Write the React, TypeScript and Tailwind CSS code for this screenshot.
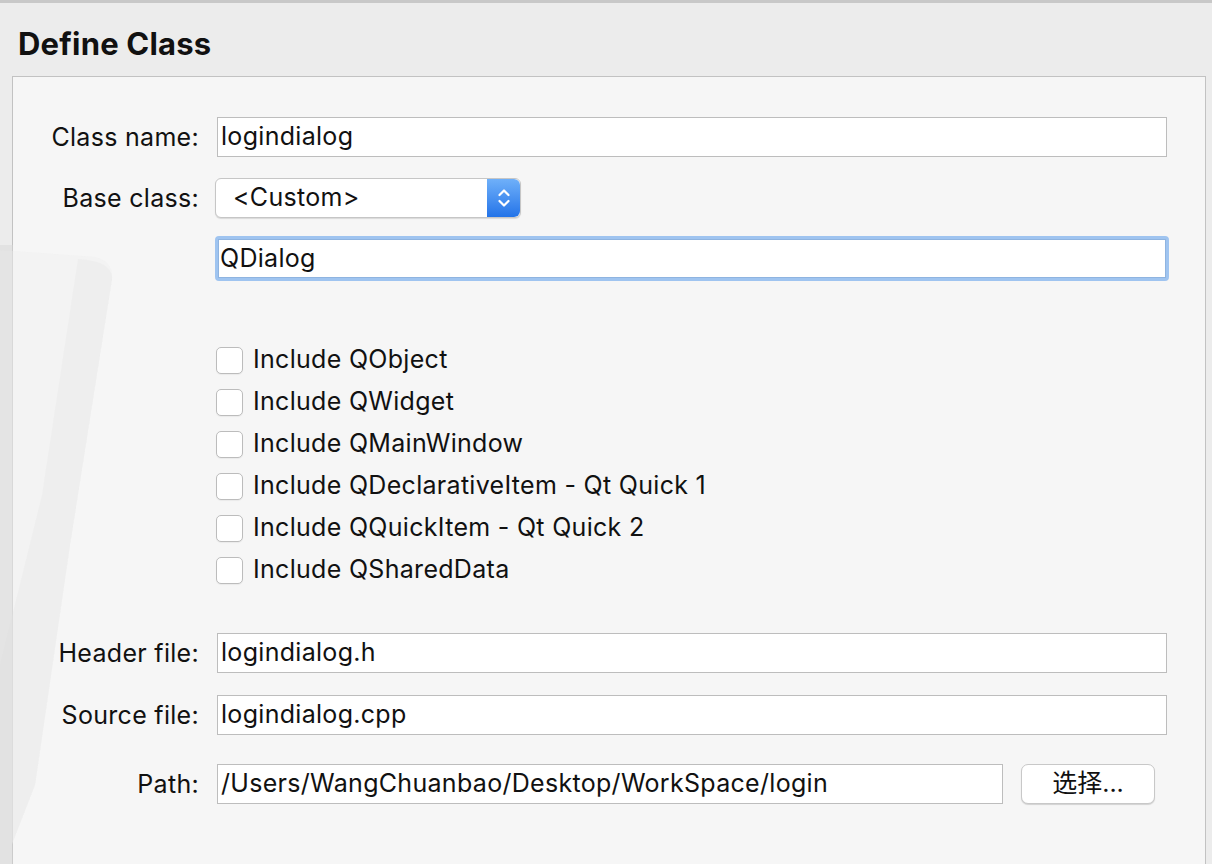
import React from 'react';

const font = { fontFamily: 'Inter, "Noto Sans CJK SC", "Liberation Sans", sans-serif' };

const checks = [
  'Include QObject',
  'Include QWidget',
  'Include QMainWindow',
  'Include QDeclarativeItem - Qt Quick 1',
  'Include QQuickItem - Qt Quick 2',
  'Include QSharedData',
];

function Label({ children }: { children: React.ReactNode }) {
  return <div className="text-right text-[25px] tracking-[0.3px] leading-none text-[#111]">{children}</div>;
}

function TextBox({ value, className = '' }: { value: string; className?: string }) {
  return (
    <div
      className={`h-[40px] bg-white border border-[#bdbdbd] flex items-center pl-[3px] text-[25px] tracking-[0.3px] text-[#111] ${className}`}
    >
      {value}
    </div>
  );
}

function Stepper() {
  return (
    <div className="w-[33px] h-full rounded-r-[6px] bg-gradient-to-b from-[#6fb0f9] to-[#2273e8] flex items-center justify-center">
      <svg width="16" height="26" viewBox="0 0 16 26" fill="none" stroke="white" strokeWidth="2.2" strokeLinecap="round" strokeLinejoin="round">
        <path d="M3.5 10 L8 5.5 L12.5 10" />
        <path d="M3.5 16 L8 20.5 L12.5 16" />
      </svg>
    </div>
  );
}

export default function App() {
  return (
    <div className="relative w-[1212px] h-[864px] overflow-hidden bg-[#ececec]" style={font}>
      <div className="h-[3px] bg-[#c8c8c8]" />
      <h1 className="pl-[18px] pt-[23px] h-[73px] text-[31px] font-bold leading-[36px] text-[#111] tracking-[0.2px]">
        Define Class
      </h1>

      {/* main panel */}
      <div className="relative ml-[12px] w-[1194px] h-[800px] bg-[#f6f6f6] border border-[#c2c2c2] pt-[40px]">
        {/* faint backdrop shape */}
        <svg className="pointer-events-none absolute left-[-13px] top-[168px]" width="130" height="640" viewBox="0 0 130 640">
          <path d="M0 5 L95 12 Q113 16 112 34 L70 300 L35 540 L0 630 Z" fill="#efefef" opacity="0.5" />
          <path d="M78 14 Q113 16 112 34 L70 300 L35 540 L0 630 L0 420 L42 250 Z" fill="#e8e8e8" opacity="0.45" />
          <path d="M0 0 L13 0 L13 640 L0 640 Z" fill="#d8d8d8" opacity="0.45" />
        </svg>

        <div className="relative grid grid-cols-[186px_950px] gap-x-[18px] items-center">
          <Label>Class name:</Label>
          <TextBox value="logindialog" />

          <div className="col-span-2 h-[21px]" />

          <Label>Base class:</Label>
          <div className="-ml-[2px] w-[306px] h-[40px] flex bg-white rounded-[6px] border border-[#c6c6c6] shadow-[0_1px_1px_rgba(0,0,0,0.12)]">
            <div className="flex-1 flex items-center pl-[17px] text-[25px] tracking-[0.3px] text-[#111]">&lt;Custom&gt;</div>
            <Stepper />
          </div>

          <div className="col-span-2 h-[18px]" />

          <div />
          <div className="-ml-[2px] w-[954px] h-[45px] rounded-[4px] border-[3px] border-[#9fc4f0] bg-white flex items-center">
            <div className="w-full h-full border border-[#8fb4e0] flex items-center pl-[1px] text-[25px] tracking-[0.3px] text-[#111]">QDialog</div>
          </div>

          <div className="col-span-2 h-[58px]" />

          <div />
          <div className="flex flex-col">
            {checks.map((c) => (
              <div key={c} className="h-[42px] flex items-center">
                <div className="-ml-[1px] w-[27px] h-[27px] rounded-[5px] border border-[#bcbcbc] bg-white shadow-[0_1px_1px_rgba(0,0,0,0.05)]" />
                <span className="ml-[10px] text-[25px] tracking-[0.3px] text-[#111]">{c}</span>
              </div>
            ))}
          </div>

          <div className="col-span-2 h-[42px]" />

          <Label>Header file:</Label>
          <TextBox value="logindialog.h" className="h-[39px]" />

          <div className="col-span-2 h-[22px]" />

          <Label>Source file:</Label>
          <TextBox value="logindialog.cpp" />

          <div className="col-span-2 h-[29px]" />

          <Label>Path:</Label>
          <div className="flex items-center gap-[18px]">
            <TextBox value="/Users/WangChuanbao/Desktop/WorkSpace/login" className="w-[786px]" />
            <button className="w-[134px] h-[40px] rounded-[7px] bg-white border border-[#c8c8c8] shadow-[0_1px_1px_rgba(0,0,0,0.15)] text-[25px] text-[#111] flex items-center justify-center">
              选择...
            </button>
          </div>
        </div>
      </div>
    </div>
  );
}
